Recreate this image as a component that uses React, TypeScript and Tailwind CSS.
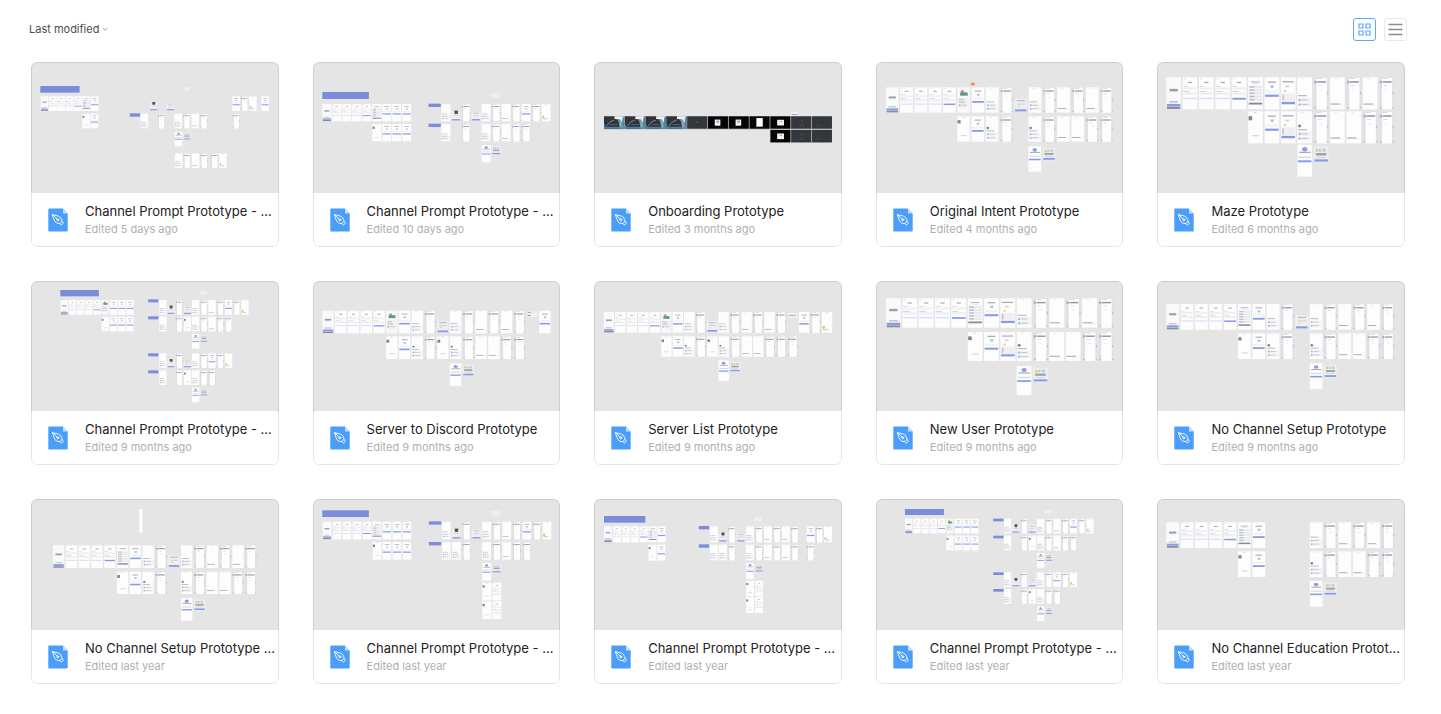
import React from "react";

/* x, y, pitch, frame width, frame height, one letter per frame ("-" leaves a gap) */
type Row = [number, number, number, number, number, string];
/* x, y, width, height, fill */
type Block = [number, number, number, number, string];

type Board = { view: string; rows: Row[]; blocks?: Block[]; accent?: string };
type FileItem = { name: string; edited: string; board: Board };

const LABEL = "#7b8cdb";
const NOTE = "#eef0f0";
const BUTTON = "#7f93e6";
const PANEL = "#eceef1";
const INK = "#909398";
const ORANGE = "#f0a04b";
const TEAL = "#5fb8a0";

function Frame({ kind, w, h, accent }: { kind: string; w: number; h: number; accent: string }) {
  const r = (x: number, y: number, rw: number, rh: number, fill: string) => (
    <rect x={x * w} y={y * h} width={rw * w} height={rh * h} fill={fill} opacity={rw < 0.9 ? 0.8 : 0.92} />
  );
  switch (kind) {
    case "S":
      return (
        <>
          {r(0, 0, 1, 1, "#fbfcfd")}
          {r(0.22, 0.36, 0.56, 0.08, "#85888e")}
          {r(0.2, 0.74, 0.6, 0.05, "#b4b6ba")}
          {r(0.04, 0.83, 0.92, 0.08, BUTTON)}
          {r(0.04, 0.92, 0.92, 0.07, "#7d838f")}
        </>
      );
    case "T":
    case "U":
      return (
        <>
          {r(0, 0, 1, 1, "#ffffff")}
          {r(0.08, 0.04, 0.12, 0.02, "#c4c6c9")}
          {r(0.36, 0.14, 0.28, 0.04, "#92959a")}
          {r(0.05, 0.27, 0.3, 0.02, "#b9bbbf")}
          {r(0.05, 0.31, 0.9, 0.07, PANEL)}
          {r(0.05, 0.43, 0.42, 0.03, "#c3c5c8")}
          {r(0.05, 0.47, 0.9, 0.08, PANEL)}
          {kind === "U" ? r(0.04, 0.64, 0.92, 0.06, BUTTON) : r(0.04, 0.64, 0.92, 0.04, "#cdd6fa")}
        </>
      );
    case "L":
      return (
        <>
          {r(0, 0, 1, 1, "#ffffff")}
          {r(0.2, 0.13, 0.6, 0.03, INK)}
          {r(0.28, 0.19, 0.44, 0.02, "#c3c5c8")}
          {[0.26, 0.36, 0.46, 0.56, 0.66].map((y) => (
            <React.Fragment key={y}>
              {r(0.05, y, 0.9, 0.08, "#e6e8eb")}
              {r(0.1, y + 0.02, 0.32, 0.04, "#a6acba")}
            </React.Fragment>
          ))}
          {r(0.04, 0.79, 0.92, 0.06, "#7d8087")}
        </>
      );
    case "I":
      return (
        <>
          {r(0, 0, 1, 1, "#ffffff")}
          {r(0.24, 0.13, 0.52, 0.04, INK)}
          {r(0.42, 0.25, 0.2, 0.08, "#9dabd9")}
          {r(0.06, 0.41, 0.88, 0.06, PANEL)}
          {r(0.04, 0.54, 0.92, 0.07, BUTTON)}
        </>
      );
    case "V":
      return (
        <>
          {r(0, 0, 1, 1, "#ffffff")}
          {r(0.1, 0.12, 0.76, 0.04, INK)}
          {r(0.3, 0.26, 0.26, 0.05, "#c3c5c8")}
          {r(0.2, 0.4, 0.16, 0.06, "#ecc948")}
          {r(0.04, 0.5, 0.92, 0.35, PANEL)}
          {r(0.1, 0.54, 0.1, 0.18, "#aab4d8")}
          {r(0.04, 0.77, 0.92, 0.07, BUTTON)}
        </>
      );
    case "P":
      return (
        <>
          {r(0, 0, 1, 1, "#fafafa")}
          <circle cx={w * 0.4} cy={h * 0.18} r={w * 0.14} fill="#d98c6c" />
          <rect x={w * 0.22} y={h * 0.2} width={w * 0.6} height={h * 0.13} fill="#5b9c87" />
          {r(0.08, 0.42, 0.84, 0.38, PANEL)}
          {r(0.12, 0.46, 0.4, 0.05, "#b9bbbf")}
          {r(0.12, 0.56, 0.5, 0.05, "#b9bbbf")}
          {r(0.12, 0.67, 0.14, 0.08, "#e39a7f")}
          {r(0.36, 0.68, 0.4, 0.05, "#c3c5c8")}
        </>
      );
    case "C":
    case "N":
      return (
        <>
          {r(0, 0, 1, 1, "#ffffff")}
          {r(0.3, 0.03, 0.2, 0.02, "#d0d2d5")}
          {kind === "N" && <circle cx={w * 0.16} cy={h * 0.46} r={w * 0.1} fill="#7b8088" />}
          {r(0.05, 0.56, 0.62, 0.03, INK)}
          {r(0.04, 0.64, 0.92, 0.13, "#f1f2f4")}
          {r(0.1, 0.68, 0.12, 0.06, BUTTON)}
          {r(0.28, 0.69, 0.42, 0.03, "#b0b3ba")}
          {r(0.04, 0.79, 0.92, 0.12, "#f1f2f4")}
          {r(0.1, 0.82, 0.12, 0.06, BUTTON)}
          {r(0.28, 0.83, 0.46, 0.03, "#b0b3ba")}
        </>
      );
    case "D":
      return (
        <>
          {r(0, 0, 1, 1, "#dfe1e4")}
          {r(0.2, 0.02, 0.68, 0.98, "#ffffff")}
          {r(0.2, 0.02, 0.68, 0.98, "#ffffff")}
          {r(0.04, 0.11, 0.16, 0.08, accent)}
          {r(0.22, 0.03, 0.36, 0.02, "#b8bbc0")}
          {r(0.24, 0.12, 0.6, 0.05, "#7b7f86")}
          {r(0.3, 0.24, 0.24, 0.03, "#d0d2d5")}
          {r(0.4, 0.38, 0.2, 0.02, "#d0d2d5")}
          {r(0.93, 0.45, 0.06, 0.08, "#a6a9af")}
          {r(0.06, 0.93, 0.1, 0.04, "#a6a9af")}
          {r(0.92, 0.93, 0.07, 0.04, "#a6a9af")}
        </>
      );
    case "W":
      return (
        <>
          {r(0, 0, 1, 1, "#ffffff")}
          {r(0.3, 0.03, 0.2, 0.02, "#cfd1d4")}
          {r(0.04, 0.82, 0.66, 0.03, "#7d8086")}
          {r(0.8, 0.86, 0.1, 0.02, "#d0d2d5")}
        </>
      );
    case "A":
      return (
        <>
          {r(0, 0, 1, 1, "#ffffff")}
          {r(0.4, 0.02, 0.18, 0.03, "#c3c5c8")}
          {r(0.03, 0.15, 0.24, 0.13, "#5f646d")}
          {r(0.28, 0.75, 0.46, 0.03, "#babcc0")}
        </>
      );
    case "X":
    case "Z":
      return (
        <>
          {r(0, 0.44, 1, 0.52, "#eff0f2")}
          {kind === "Z" ? (
            <rect x={w * 0.32} y={h * 0.38} width={w * 0.4} height={h * 0.2} rx={w * 0.1} fill="#5a5348" />
          ) : (
            r(0.18, 0.5, 0.66, 0.05, "#aeb0b5")
          )}
          {r(0.18, 0.64, 0.66, 0.04, "#c3c5c8")}
          {kind === "X" && r(0.26, 0.72, 0.14, 0.07, "#e0d48e")}
          {r(0.04, 0.87, 0.92, 0.08, BUTTON)}
        </>
      );
    case "G":
      return (
        <>
          {r(0, 0.06, 1, 0.5, "#edeff1")}
          {r(0.14, 0.13, 0.16, 0.09, "#d9c554")}
          {r(0.36, 0.13, 0.14, 0.09, "#b4bfae")}
          {r(0.6, 0.12, 0.2, 0.1, "#b4c0de")}
          {r(0.14, 0.26, 0.72, 0.08, INK)}
          {r(0.2, 0.38, 0.6, 0.03, "#c9cbce")}
          {r(0.04, 0.46, 0.92, 0.07, BUTTON)}
        </>
      );
    case "H":
      return (
        <>
          {r(0, 0, 1, 1, "#ffffff")}
          <ellipse cx={w * 0.5} cy={h * 0.14} rx={w * 0.18} ry={h * 0.07} fill="#8b9de8" />
          {r(0.12, 0.22, 0.78, 0.04, INK)}
          {r(0.08, 0.37, 0.84, 0.05, "#cfd2d7")}
          {r(0.04, 0.49, 0.92, 0.06, BUTTON)}
        </>
      );
    case "Y":
      return (
        <>
          {r(0, 0, 1, 1, "#ffffff")}
          {r(0.36, 0.02, 0.26, 0.03, "#c3c5c8")}
          <rect x={w * 0.06} y={h * 0.68} width={w * 0.24} height={h * 0.13} fill="#ecc948" />
          {r(0.1, 0.83, 0.54, 0.05, "#b1b4ba")}
        </>
      );
    case "M":
      return (
        <>
          <rect width={w} height={h} fill="#303439" />
          <path d={`M0 ${h}V${h * 0.55}L${w * 0.08} ${h * 0.84}H${w}V${h}Z`} fill="#4c7ba5" />
          <path d={`M${w * 0.5} 0H${w}V${h}H${w * 0.8}L${w * 0.72} ${h * 0.4}Z`} fill="#6d93b0" />
          <path d={`M${w * 0.54} 0H${w * 0.98}L${w * 0.92} ${h * 0.5}L${w * 0.78} ${h * 0.22}H${w * 0.52}Z`} fill="#eef1f4" />
          <path d={`M${w * 0.12} ${h * 0.8}L${w * 0.3} ${h * 0.45}L${w * 0.52} ${h * 0.3}`} stroke="#a5aeb5" strokeWidth="2" fill="none" />
          <path d={`M${w * 0.3} ${h * 0.66}H${w * 0.7}`} stroke="#6b7885" strokeWidth="2" fill="none" />
          {r(0.8, 0.35, 0.07, 0.5, "#98c4a4")}
          {r(0.92, 0.1, 0.06, 0.8, "#4780b0")}
        </>
      );
    case "K":
      return (
        <>
          <rect width={w} height={h} fill="#33373c" />
          {r(0.46, 0.42, 0.06, 0.1, "#787d84")}
        </>
      );
    case "J":
      return (
        <>
          <rect width={w} height={h} fill="#33373c" />
          {r(0.5, 0.3, 0.08, 0.14, "#555a62")}
          {r(0.42, 0.55, 0.06, 0.28, "#4c5158")}
          {r(0.56, 0.6, 0.06, 0.2, "#555a62")}
        </>
      );
    case "E":
      return (
        <>
          <rect width={w} height={h} fill="#33373c" />
          {r(0.26, 0.7, 0.14, 0.05, "#62676e")}
        </>
      );
    case "a":
      return (
        <>
          <rect width={w} height={h} fill="#050505" />
          <rect x={w * 0.34} y={h * 0.26} width={w * 0.28} height={h * 0.5} fill="#f4f4f6" />
          {r(0.42, 0.34, 0.14, 0.18, "#9a87d8")}
        </>
      );
    case "b":
      return (
        <>
          <rect width={w} height={h} fill="#050505" />
          <rect x={w * 0.34} y={h * 0.14} width={w * 0.32} height={h * 0.7} fill="#ffffff" />
        </>
      );
    case "c":
      return (
        <>
          <rect width={w} height={h} fill="#050505" />
          <rect x={w * 0.34} y={h * 0.28} width={w * 0.34} height={h * 0.46} fill="#f4f4f4" />
          {r(0.46, 0.38, 0.12, 0.1, "#9c9c9c")}
        </>
      );
    default:
      return null;
  }
}

function Thumbnail({ board }: { board: Board }) {
  return (
    <svg viewBox={board.view} preserveAspectRatio="none" aria-hidden="true" className="block aspect-[36/19] w-full bg-[#e5e5e5]">
      {board.blocks?.map(([x, y, w, h, fill], i) => (
        <rect key={i} x={x} y={y} width={w} height={h} fill={fill} />
      ))}
      {board.rows.map(([x, y, pitch, w, h, kinds], i) => (
        <g key={i} transform={`translate(${x} ${y})`}>
          {kinds.split("").map((kind, n) => (
            <g key={n} transform={`translate(${n * pitch} 0)`}>
              <Frame kind={kind} w={w} h={h} accent={board.accent ?? "#8fa0e0"} />
            </g>
          ))}
        </g>
      ))}
    </svg>
  );
}

const files: FileItem[] = [
  {
    name: "Channel Prompt Prototype - ...",
    edited: "Edited 5 days ago",
    board: {
      view: "33 21 744 392",
      blocks: [[61, 93, 118, 20, LABEL], [330, 175, 31, 10, LABEL], [490, 96, 20, 12, NOTE]],
      rows: [
        [62, 124, 25.2, 23, 44, "STTTULI"],
        [187, 176, 25.2, 23, 44, "AI"],
        [390, 124, 25.3, 23, 44, "Z-X"],
        [638, 124, 25, 23, 44, "IDY"],
        [725, 124, 25, 23, 44, "I"],
        [362, 176, 25.5, 23, 44, "C-D-CDWD"],
        [638, 176, 25, 23, 44, "D"],
        [465, 230, 25.5, 23, 44, "HG"],
        [465, 295, 25.5, 23, 44, "CDWD"],
        [573, 295, 25, 23, 44, "DY"],
      ],
    },
  },
  {
    name: "Channel Prompt Prototype - ...",
    edited: "Edited 10 days ago",
    board: {
      view: "24 21 744 392",
      blocks: [[52, 111, 140, 21, LABEL], [371, 146, 37, 10, LABEL], [371, 206, 37, 10, LABEL], [560, 114, 25, 13, NOTE]],
      rows: [
        [52, 147, 30, 27, 52, "STTTULIII"],
        [202, 207, 30, 27, 52, "AIII"],
        [410, 147, 30.1, 27, 52, "CZDXCDWDIDY"],
        [410, 207, 30.1, 27, 52, "C-D-CDWDD"],
        [531, 270, 30, 27, 52, "HG"],
      ],
    },
  },
  {
    name: "Onboarding Prototype",
    edited: "Edited 3 months ago",
    board: {
      view: "27 21 744 392",
      blocks: [[57, 183, 685, 40, "#aeb0b3"], [557, 223, 185, 40, "#aeb0b3"], [619, 171, 20, 10, "#f2f2f4"], [621, 177, 16, 3, "#aaa2da"]],
      rows: [
        [57, 184, 62.5, 60, 37, "MMMMKaabcJE"],
        [557, 225, 62.5, 60, 37, "cJE"],
      ],
    },
  },
  {
    name: "Original Intent Prototype",
    edited: "Edited 4 months ago",
    board: {
      view: "24 21 744 392",
      accent: ORANGE,
      blocks: [[310, 83, 10, 8, "#ee8a3a"]],
      rows: [
        [54, 97, 42.9, 38, 76, "STTTUPICDXCDWDWD"],
        [268, 184, 42.9, 38, 76, "AIND-NDWWDD"],
        [482, 274, 42.9, 38, 76, "HG"],
      ],
    },
  },
  {
    name: "Maze Prototype",
    edited: "Edited 6 months ago",
    board: {
      view: "24 186 744 392",
      rows: [
        [52, 232, 49.2, 44, 96, "STTTULIVCDWDWD"],
        [298, 334, 49.2, 44, 96, "AIVNDWWDD"],
        [446, 434, 49.2, 44, 96, "HG"],
      ],
    },
  },
  {
    name: "Channel Prompt Prototype - ...",
    edited: "Edited 9 months ago",
    board: {
      view: "33 18 744 392",
      blocks: [
        [121, 45, 116, 19, LABEL],
        [385, 73, 31, 9, LABEL],
        [385, 124, 31, 9, LABEL],
        [385, 235, 31, 9, LABEL],
        [385, 286, 31, 9, LABEL],
        [541, 48, 20, 11, NOTE],
      ],
      rows: [
        [122, 75, 24.7, 22, 44, "STTTUPIII"],
        [245, 125, 24.7, 22, 44, "AIII"],
        [418, 75, 24.7, 22, 44, "CZDXCDWDIDY"],
        [418, 125, 24.7, 22, 44, "C-DACDWDD"],
        [517, 177, 24.7, 22, 44, "HG"],
        [418, 235, 24.7, 22, 44, "CZDXCDIDY"],
        [418, 286, 24.7, 22, 44, "C-DACDD"],
        [517, 338, 24.7, 22, 44, "HG"],
      ],
    },
  },
  {
    name: "Server to Discord Prototype",
    edited: "Edited 9 months ago",
    board: {
      view: "23 18 718 392",
      blocks: [[645, 109, 30, 17, NOTE], [646, 112, 10, 2, INK], [646, 120, 8, 3, INK]],
      rows: [
        [50, 107, 37, 33, 68, "STTTUPICDXCDWDWD-I"],
        [235, 184, 37, 33, 68, "AINDANDWWDD"],
        [420, 265, 37, 33, 68, "HG"],
      ],
    },
  },
  {
    name: "Server List Prototype",
    edited: "Edited 9 months ago",
    board: {
      view: "840 18 718 392",
      accent: TEAL,
      blocks: [[1404, 114, 26, 15, NOTE], [1405, 120, 20, 3, "#b1b4ba"]],
      rows: [
        [868, 111, 33.3, 30, 62, "STTTUPICDXCDWDWD-IDY"],
        [1035, 184, 33.3, 30, 61, "AINDANDWWDDD"],
        [1201, 256, 33.3, 30, 62, "HG"],
      ],
    },
  },
  {
    name: "New User Prototype",
    edited: "Edited 9 months ago",
    board: {
      view: "23 18 718 392",
      rows: [
        [52, 70, 47.4, 43, 88, "STTTULIVCDWDWD"],
        [289, 171, 47.4, 43, 87, "AIVNDWWDD"],
        [431, 273, 47.4, 43, 87, "HG"],
      ],
    },
  },
  {
    name: "No Channel Setup Prototype",
    edited: "Edited 9 months ago",
    board: {
      view: "842 18 718 392",
      rows: [
        [869, 87, 41.6, 37, 77, "STTTULICDXCDWDWD"],
        [1077, 175, 41.6, 37, 77, "AIND-NDWWDD"],
        [1285, 265, 41.6, 37, 77, "HG"],
      ],
    },
  },
  {
    name: "No Channel Setup Prototype ...",
    edited: "Edited last year",
    board: {
      view: "33 27 744 392",
      blocks: [[358, 57, 10, 71, "#fcfcfc"]],
      rows: [
        [99, 166, 38.5, 34, 68, "STTTULICDXCDWDWD"],
        [291, 245, 38.5, 34, 67, "AIND-NDWWDD"],
        [484, 324, 38.5, 34, 68, "HG"],
      ],
    },
  },
  {
    name: "Channel Prompt Prototype - ...",
    edited: "Edited last year",
    board: {
      view: "23 27 718 392",
      blocks: [[50, 61, 135, 20, LABEL], [359, 94, 36, 10, LABEL], [359, 156, 36, 10, LABEL], [541, 63, 25, 13, NOTE]],
      rows: [
        [51, 95, 29, 25, 53, "STTTULIII"],
        [196, 156, 29, 25, 53, "AIII"],
        [397, 95, 29.2, 25, 53, "CZDXCDWDIDY"],
        [397, 156, 29.2, 25, 53, "CCD-CDWDD"],
        [514, 219, 29.2, 25, 53, "HG"],
        [514, 278, 29.2, 26, 53, "AT"],
        [514, 334, 29.2, 26, 53, "AT"],
      ],
    },
  },
  {
    name: "Channel Prompt Prototype - ...",
    edited: "Edited last year",
    board: {
      view: "840 27 718 392",
      blocks: [[869, 78, 120, 20, LABEL], [1144, 108, 30, 10, LABEL], [1144, 163, 30, 10, LABEL], [1305, 81, 22, 12, NOTE]],
      rows: [
        [869, 109, 25.9, 23, 48, "STTTULI"],
        [998, 164, 25.9, 23, 48, "AI"],
        [1176, 109, 26.1, 23, 48, "CZDXCDWDWD"],
        [1457, 109, 25, 23, 48, "IDY"],
        [1176, 164, 26.1, 23, 47, "CCD-CDWDWD"],
        [1456, 164, 25, 23, 47, "D"],
        [1281, 219, 26.1, 23, 48, "HG"],
        [1281, 272, 26.1, 23, 47, "AT"],
        [1281, 321, 26.1, 23, 48, "AT"],
      ],
    },
  },
  {
    name: "Channel Prompt Prototype - ...",
    edited: "Edited last year",
    board: {
      view: "23 27 718 392",
      blocks: [
        [107, 57, 113, 18, LABEL],
        [363, 86, 30, 8, LABEL],
        [363, 137, 30, 8, LABEL],
        [363, 247, 30, 8, LABEL],
        [363, 297, 30, 8, LABEL],
        [513, 60, 20, 11, NOTE],
      ],
      rows: [
        [107, 86, 24, 21, 44, "STTTUPIII"],
        [227, 137, 24, 21, 44, "AIII"],
        [394, 86, 23.9, 21, 44, "CZDXCDWDIDY"],
        [394, 137, 23.9, 21, 44, "C-DACDWDD"],
        [490, 189, 23.9, 21, 44, "HG"],
        [394, 247, 23.9, 21, 44, "CZDXCDIDY"],
        [394, 297, 23.9, 21, 44, "C-DACDD"],
        [490, 349, 23.9, 21, 44, "HG"],
      ],
    },
  },
  {
    name: "No Channel Education Protot...",
    edited: "Edited last year",
    board: {
      view: "842 27 718 392",
      rows: [
        [869, 97, 41.6, 37, 77, "STTTULI"],
        [1077, 184, 41.6, 37, 77, "AI"],
        [1285, 97, 41.6, 37, 77, "CDWDWD"],
        [1285, 184, 41.6, 37, 77, "NDWWDD"],
        [1285, 273, 41.6, 37, 77, "HG"],
      ],
    },
  },
];

function FileIcon() {
  return (
    <svg viewBox="0 0 20 24" aria-hidden="true" className="h-6 w-5 shrink-0">
      <path d="M1.2 .5H15l4.7 5V22.6q0 .9-.9 .9H1.2q-.9 0-.9-.9V1.4Q.3 .5 1.2 .5Z" fill="#4a9df8" />
      <path d="M15 .5l4.7 5H15.6q-.6 0-.6-.6Z" fill="#c3e0fd" />
      <g fill="none" stroke="#fff" strokeWidth=".9" strokeLinecap="round" strokeLinejoin="round">
        <path d="M4.7 6.7L10.4 8.1C12.6 8.8 13.8 10.8 14 13.4L11.8 15.6C9.2 15.7 7 14.6 6.3 12.3Z" />
        <path d="M14 13.4L15.4 15.2 13.5 17.1 11.8 15.6" />
        <path d="M4.8 6.8L9.1 11.1" />
        <circle cx="9.8" cy="11.8" r="1" />
      </g>
    </svg>
  );
}

function FileCard({ file }: { file: FileItem }) {
  return (
    <a
      href="#file"
      className="relative block min-w-0 overflow-hidden rounded-md bg-white after:pointer-events-none after:absolute after:inset-0 after:rounded-md after:border after:border-black/10"
    >
      <Thumbnail board={file.board} />
      <div className="flex h-[54px] items-center gap-[17px] pr-px pl-[17px]">
        <FileIcon />
        <div className="min-w-0 flex-1">
          <h2 className="truncate text-[13px] leading-[18px] font-normal text-[#222222]">{file.name}</h2>
          <p className="truncate text-[11px] leading-[18px] text-[#b0b0b0]">{file.edited}</p>
        </div>
      </div>
    </a>
  );
}

export default function App() {
  return (
    <main className="min-h-screen bg-white pb-[30px] font-['Inter',sans-serif]">
      <header className="flex items-center justify-between pt-[17px] pr-[34px] pl-[29px]">
        <button type="button" aria-haspopup="listbox" className="flex items-center gap-0.5 text-[11px] leading-6 text-[#4d4d4d]">
          Last modified
          <svg viewBox="0 0 8 8" aria-hidden="true" className="size-2">
            <path d="M1.7 3L4 5.2 6.3 3" fill="none" stroke="#a6a6a6" />
          </svg>
        </button>
        <div className="flex gap-2">
          <button
            type="button"
            aria-label="Grid view"
            aria-pressed="true"
            className="flex size-[23px] items-center justify-center rounded-[3px] border border-[#5aa9f7]"
          >
            <svg viewBox="0 0 13 13" aria-hidden="true" className="size-[13px]">
              <path d="M1 1h4v4H1zM8 1h4v4H8zM1 8h4v4H1zM8 8h4v4H8z" fill="none" stroke="#5aa9f7" strokeWidth="1.2" />
            </svg>
          </button>
          <button
            type="button"
            aria-label="List view"
            aria-pressed="false"
            className="flex size-[23px] items-center justify-center rounded-[3px] border border-[#e8e8e8]"
          >
            <svg viewBox="0 0 15 13" aria-hidden="true" className="h-[13px] w-[15px]">
              <path d="M.5 1.5h14M.5 6.5h14M.5 11.5h14" stroke="#8c8c8c" strokeWidth="1.5" />
            </svg>
          </button>
        </div>
      </header>
      <section aria-label="Files" className="mt-[21px] grid grid-cols-2 gap-[34px] pr-9 pl-[31px] md:grid-cols-3 xl:grid-cols-5">
        {files.map((file, i) => (
          <FileCard key={i} file={file} />
        ))}
      </section>
    </main>
  );
}
